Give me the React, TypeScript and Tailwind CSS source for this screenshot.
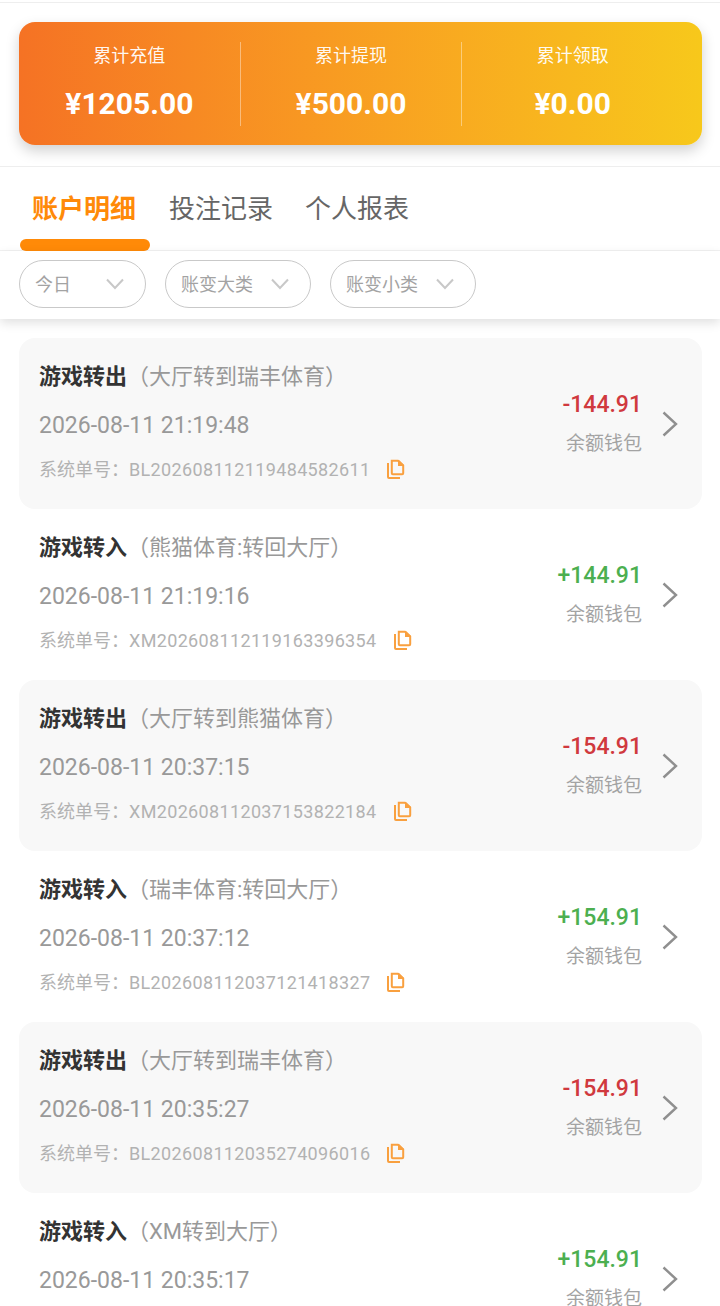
import React from "react";

const FONT = "font-['Roboto','Noto_Sans_CJK_SC',sans-serif]";

const items = [
  { t: "游戏转出", d: "（大厅转到瑞丰体育）", time: "2026-08-11 21:19:48", no: "BL20260811211948458​2611".replace("\u200b", ""), amt: "-144.91" },
  { t: "游戏转入", d: "（熊猫体育:转回大厅）", time: "2026-08-11 21:19:16", no: "XM20260811211916339​6354".replace("\u200b", ""), amt: "+144.91" },
  { t: "游戏转出", d: "（大厅转到熊猫体育）", time: "2026-08-11 20:37:15", no: "XM20260811203715382​2184".replace("\u200b", ""), amt: "-154.91" },
  { t: "游戏转入", d: "（瑞丰体育:转回大厅）", time: "2026-08-11 20:37:12", no: "BL20260811203712141​8327".replace("\u200b", ""), amt: "+154.91" },
  { t: "游戏转出", d: "（大厅转到瑞丰体育）", time: "2026-08-11 20:35:27", no: "BL20260811203527409​6016".replace("\u200b", ""), amt: "-154.91" },
  { t: "游戏转入", d: "（XM转到大厅）", time: "2026-08-11 20:35:17", no: "XM20260811203517000​0000".replace("\u200b", ""), amt: "+154.91" },
];

function Chevron({ className }: { className?: string }) {
  return (
    <svg viewBox="0 0 18 12" className={className} fill="none" stroke="currentColor" strokeWidth="2">
      <path d="M1 1.5 L9 10 L17 1.5" />
    </svg>
  );
}

function CopyIcon() {
  return (
    <svg width="18" height="20" viewBox="0 0 18 20" fill="none" className="shrink-0 text-[#f9a03f]">
      <path d="M1 4 V18 A1 1 0 0 0 2 19 H13" stroke="currentColor" strokeWidth="2" />
      <path d="M4.8 1.8 H11 L16.2 6.5 V14.2 A1 1 0 0 1 15.2 15.2 H5.8 A1 1 0 0 1 4.8 14.2 Z" stroke="currentColor" strokeWidth="2" />
      <path d="M11 1 H12 L17 6 V7 H11 Z" fill="currentColor" />
    </svg>
  );
}

function Stat({ label, value, divider }: { label: string; value: string; divider?: boolean }) {
  return (
    <div className={`flex h-[84px] flex-1 flex-col items-center ${divider ? "border-r border-white/40" : ""}`}>
      <div className="mt-[1px] text-[18px] leading-[26px] text-white/95">{label}</div>
      <div className="mt-[17px] text-[30px] leading-[36px] font-bold text-white">{value}</div>
    </div>
  );
}

function Filter({ label, w, gap }: { label: string; w: string; gap: string }) {
  return (
    <div className={`flex h-[48px] items-center rounded-[24px] border border-[#c9c9c9] pl-[15px] ${w}`}>
      <span className="text-[18px] text-[#a3a3a3]">{label}</span>
      <Chevron className={`h-[12px] w-[18px] text-[#c8c8c8] ${gap}`} />
    </div>
  );
}

function Row({ it, shade }: { it: (typeof items)[number]; shade: boolean }) {
  const up = it.amt.startsWith("+");
  return (
    <div className={`flex h-[171px] items-center rounded-[16px] pl-[20px] pr-[24px] ${shade ? "bg-[#f8f8f8]" : ""}`}>
      <div className="flex-1 self-start pt-[22px]">
        <div className="flex h-[32px] items-center text-[22px]">
          <span className="font-bold text-[#333333]">{it.t}</span>
          <span className="text-[#999999]">{it.d}</span>
        </div>
        <div className="mt-[18px] h-[32px] text-[23px] leading-[32px] text-[#999999]">{it.time}</div>
        <div className="mt-[13px] flex h-[28px] items-center text-[18px] text-[#b2b2b2]">
          <span>系统单号：</span>
          <span className="tracking-[0.35px]">{it.no}</span>
          <span className="ml-[17px]"><CopyIcon /></span>
        </div>
      </div>
      <div className="flex flex-col items-end">
        <div className={`text-[23px] leading-[32px] font-medium ${up ? "text-[#4caf50]" : "text-[#d0393e]"}`}>{it.amt}</div>
        <div className="mt-[9px] text-[19px] leading-[28px] text-[#a3a3a3]">余额钱包</div>
      </div>
      <svg width="16" height="26" viewBox="0 0 16 26" fill="none" stroke="#8f8f8f" strokeWidth="2.4" className="ml-[20px]">
        <path d="M1.5 1.5 L14 13 L1.5 24.5" />
      </svg>
    </div>
  );
}

export default function App() {
  return (
    <div className={`h-[1306px] w-[720px] overflow-hidden bg-white ${FONT}`}>
      <div className="h-[165px] border-t-[1px] border-b-[1px] border-[#eeeeee] mt-[2px] pt-[19px] pl-[19px] pr-[18px]">
        <div className="flex h-[123px] items-center rounded-[16px] bg-gradient-to-r from-[#f57224] to-[#f7c81b] pr-[19px] shadow-[0_6px_14px_rgba(0,0,0,0.18)]">
          <Stat label="累计充值" value="¥1205.00" divider />
          <Stat label="累计提现" value="¥500.00" divider />
          <Stat label="累计领取" value="¥0.00" />
        </div>
      </div>
      <div className="relative flex h-[84px] border-b border-[#f2f2f2] pl-[32px] pt-[24px]">
        <span className="text-[26px] leading-[36px] font-bold text-[#ff8a08]">账户明细</span>
        <span className="ml-[33px] text-[26px] leading-[36px] text-[#666666]">投注记录</span>
        <span className="ml-[32px] text-[26px] leading-[36px] text-[#666666]">个人报表</span>
        <div className="absolute bottom-[-1px] left-[20px] h-[12px] w-[130px] rounded-[6px] bg-[#ff8a08]" />
      </div>
      <div className="relative z-10 flex h-[68px] gap-[19px] bg-white pl-[19px] pt-[9px] shadow-[0_4px_10px_rgba(0,0,0,0.12)]">
        <Filter label="今日" w="w-[127px]" gap="ml-[35px]" />
        <Filter label="账变大类" w="w-[146px]" gap="ml-[18px]" />
        <Filter label="账变小类" w="w-[146px]" gap="ml-[18px]" />
      </div>
      <div className="pl-[19px] pr-[18px] pt-[19px]">
        {items.map((it, i) => (
          <Row key={i} it={it} shade={i % 2 === 0} />
        ))}
      </div>
    </div>
  );
}
